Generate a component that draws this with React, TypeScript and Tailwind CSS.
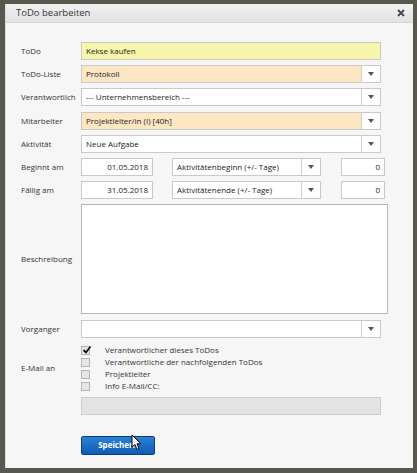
import React from 'react';

const font = { fontFamily: '"Open Sans", "Liberation Sans", sans-serif' };

const Arrow = () => (
  <div className="w-[19px] h-full flex items-center justify-center border-l border-[#cfcfcf] bg-white">
    <svg width="6" height="4" viewBox="0 0 6 4">
      <path d="M0 0 L6 0 L3 4 Z" fill="#555" />
    </svg>
  </div>
);

interface FieldProps {
  value?: string;
  bg?: string;
  select?: boolean;
  className?: string;
  right?: boolean;
}

const Field = ({ value = '', bg = 'bg-white', select = false, className = 'w-[300px]', right = false }: FieldProps) => (
  <div className={`${className} h-[18px] flex border border-[#c9c9c9] ${bg}`}>
    <div className={`flex-1 flex items-center px-[4px] text-[8px] text-[#222] ${right ? 'justify-end' : ''}`}>{value}</div>
    {select && <Arrow />}
  </div>
);

const Row = ({ label, children }: { label: string; children: React.ReactNode }) => (
  <div className="flex items-center">
    <div className="w-[60px] text-[8px] text-[#333]">{label}</div>
    {children}
  </div>
);

const Check = ({ checked = false, label }: { checked?: boolean; label: string }) => (
  <div className="flex items-center h-[12px]">
    <div className="w-[9px] h-[9px] border border-[#b5b5b5] bg-[#e6e6e6] relative">
      {checked && (
        <svg className="absolute -top-[2px] left-0" width="10" height="10" viewBox="0 0 10 10">
          <path d="M1.5 5 L4 7.5 L8.5 1.5" stroke="#111" strokeWidth="1.8" fill="none" />
        </svg>
      )}
    </div>
    <div className="ml-[15px] text-[8px] text-[#333]">{label}</div>
  </div>
);

export default function App() {
  return (
    <div className="w-[417px] h-[473px] bg-[#58584f] pt-[4px] pl-[5px]" style={font}>
      <div className="w-[408px] h-[464px] bg-[#f6f6f6] border-l border-[#dcdcdc] flex flex-col relative">
        <div className="h-[19px] flex items-center justify-between pl-[10px] pr-[8px] bg-gradient-to-b from-[#f2f2f2] to-[#e2e2e2] border-b border-[#d4d4d4]">
          <div className="text-[9.5px] text-[#333]">ToDo bearbeiten</div>
          <svg width="8" height="8" viewBox="0 0 8 8">
            <path d="M1 1 L7 7 M7 1 L1 7" stroke="#444" strokeWidth="1.8" />
          </svg>
        </div>

        <div className="flex flex-col pl-[15px] pt-[19px] gap-[5px]">
          <Row label="ToDo">
            <Field value="Kekse kaufen" bg="bg-[#f7f5a9]" />
          </Row>
          <Row label="ToDo-Liste">
            <Field value="Protokoll" bg="bg-[#fde7c3]" select />
          </Row>
          <Row label="Verantwortlich">
            <Field value="--- Unternehmensbereich ---" select />
          </Row>
          <div className="mt-[1px]">
            <Row label="Mitarbeiter">
              <Field value="Projektleiter/in (I) [40h]" bg="bg-[#fde7c3]" select />
            </Row>
          </div>
          <Row label="Aktivität">
            <Field value="Neue Aufgabe" select />
          </Row>
          <Row label="Beginnt am">
            <Field value="01.05.2018" className="w-[72px]" right />
            <Field value="Aktivitätenbeginn (+/- Tage)" className="w-[149px] ml-[19px]" select />
            <Field value="0" className="w-[44px] ml-[20px]" right />
          </Row>
          <Row label="Fällig am">
            <Field value="31.05.2018" className="w-[72px]" right />
            <Field value="Aktivitätenende (+/- Tage)" className="w-[149px] ml-[19px]" select />
            <Field value="0" className="w-[44px] ml-[20px]" right />
          </Row>
          <Row label="Beschreibung">
            <div className="w-[307px] h-[110px] border border-[#b8b8b8] bg-white" />
          </Row>
          <div className="mt-[1px]">
            <Row label="Vorganger">
              <Field select />
            </Row>
          </div>
          <div className="flex items-center mt-[1px]">
            <div className="w-[60px] text-[8px] text-[#333]">E-Mail an</div>
            <div className="flex flex-col">
              <Check checked label="Verantwortlicher dieses ToDos" />
              <Check label="Verantwortliche der nachfolgenden ToDos" />
              <Check label="Projektleiter" />
              <Check label="Info E-Mail/CC:" />
            </div>
          </div>
          <div className="flex">
            <div className="w-[60px]" />
            <div className="w-[300px] h-[18px] border border-[#cdcdcd] bg-[#e3e3e3]" />
          </div>
          <div className="flex mt-[10px]">
            <div className="w-[60px]" />
            <div className="relative">
              <button className="w-[74px] h-[19px] rounded-[2px] border border-[#0d3f80] bg-gradient-to-b from-[#2c7fd6] to-[#0f5cb3] text-white text-[8px] font-bold">
                Speichern
              </button>
              <svg className="absolute left-[50px] top-[4px]" width="11" height="17" viewBox="0 0 11 17">
                <path d="M1 1 L1 13 L4 10.5 L6 15.5 L8 14.5 L6 9.8 L10 9.8 Z" fill="#fff" stroke="#000" strokeWidth="1" />
              </svg>
            </div>
          </div>
        </div>
      </div>
    </div>
  );
}
